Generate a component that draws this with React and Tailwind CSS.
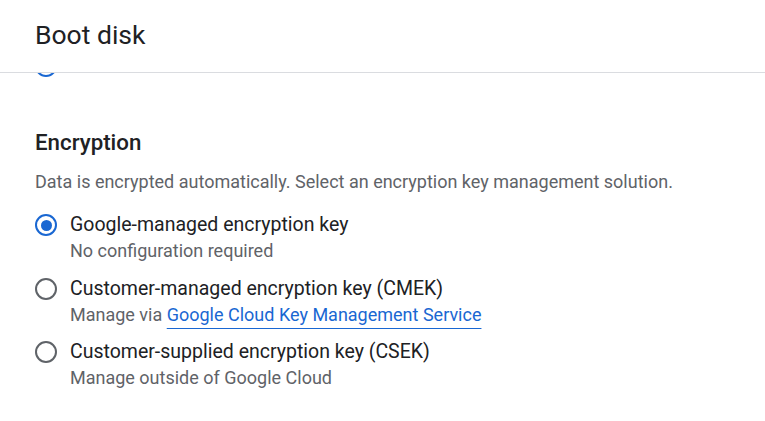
import React from "react";

const Radio = ({ checked, className = "" }) =>
  checked ? (
    <span
      className={`flex h-[22px] w-[22px] shrink-0 items-center justify-center rounded-full border-[2.5px] border-[#1967d2] ${className}`}
    >
      <span className="h-[11px] w-[11px] rounded-full bg-[#1967d2]" />
    </span>
  ) : (
    <span
      className={`h-[22px] w-[22px] shrink-0 rounded-full border-[2.5px] border-[#5f6368] ${className}`}
    />
  );

const options = [
  {
    label: "Google-managed encryption key",
    sub: "No configuration required",
    checked: true,
  },
  {
    label: "Customer-managed encryption key (CMEK)",
    sub: (
      <>
        Manage via{" "}
        <a className="text-[#1967d2] underline decoration-1 underline-offset-[7px]">
          Google Cloud Key Management Service
        </a>
      </>
    ),
  },
  {
    label: "Customer-supplied encryption key (CSEK)",
    sub: "Manage outside of Google Cloud",
  },
];

export default function App() {
  return (
    <div className="flex h-[421px] w-[765px] flex-col overflow-hidden bg-white font-['Roboto',sans-serif]">
      <header className="flex h-[73px] shrink-0 items-center border-b border-[#dadce0] px-[35px] pb-[3px]">
        <h1 className="text-[26.5px] leading-[32px] text-[#202124]">Boot disk</h1>
      </header>

      <div className="flex-1 overflow-hidden px-[35px]">
        <div className="-mt-[18px]">
          <Radio checked />
        </div>

        <h2 className="mt-[51px] text-[22.3px] font-medium leading-[28px] text-[#202124]">
          Encryption
        </h2>
        <p className="mt-[13.5px] text-[18px] leading-[24px] text-[#5f6368]">
          Data is encrypted automatically. Select an encryption key management solution.
        </p>

        <div className="mt-[18.5px] flex flex-col gap-[12.5px]">
          {options.map((opt) => (
            <div key={opt.label} className="flex items-start gap-[13px]">
              <Radio checked={opt.checked} className="mt-[2px]" />
              <div className="flex flex-col">
                <span className="text-[19.5px] leading-[26px] text-[#202124]">{opt.label}</span>
                <span className="mt-[1px] text-[18px] leading-[24px] text-[#5f6368]">{opt.sub}</span>
              </div>
            </div>
          ))}
        </div>
      </div>
    </div>
  );
}
